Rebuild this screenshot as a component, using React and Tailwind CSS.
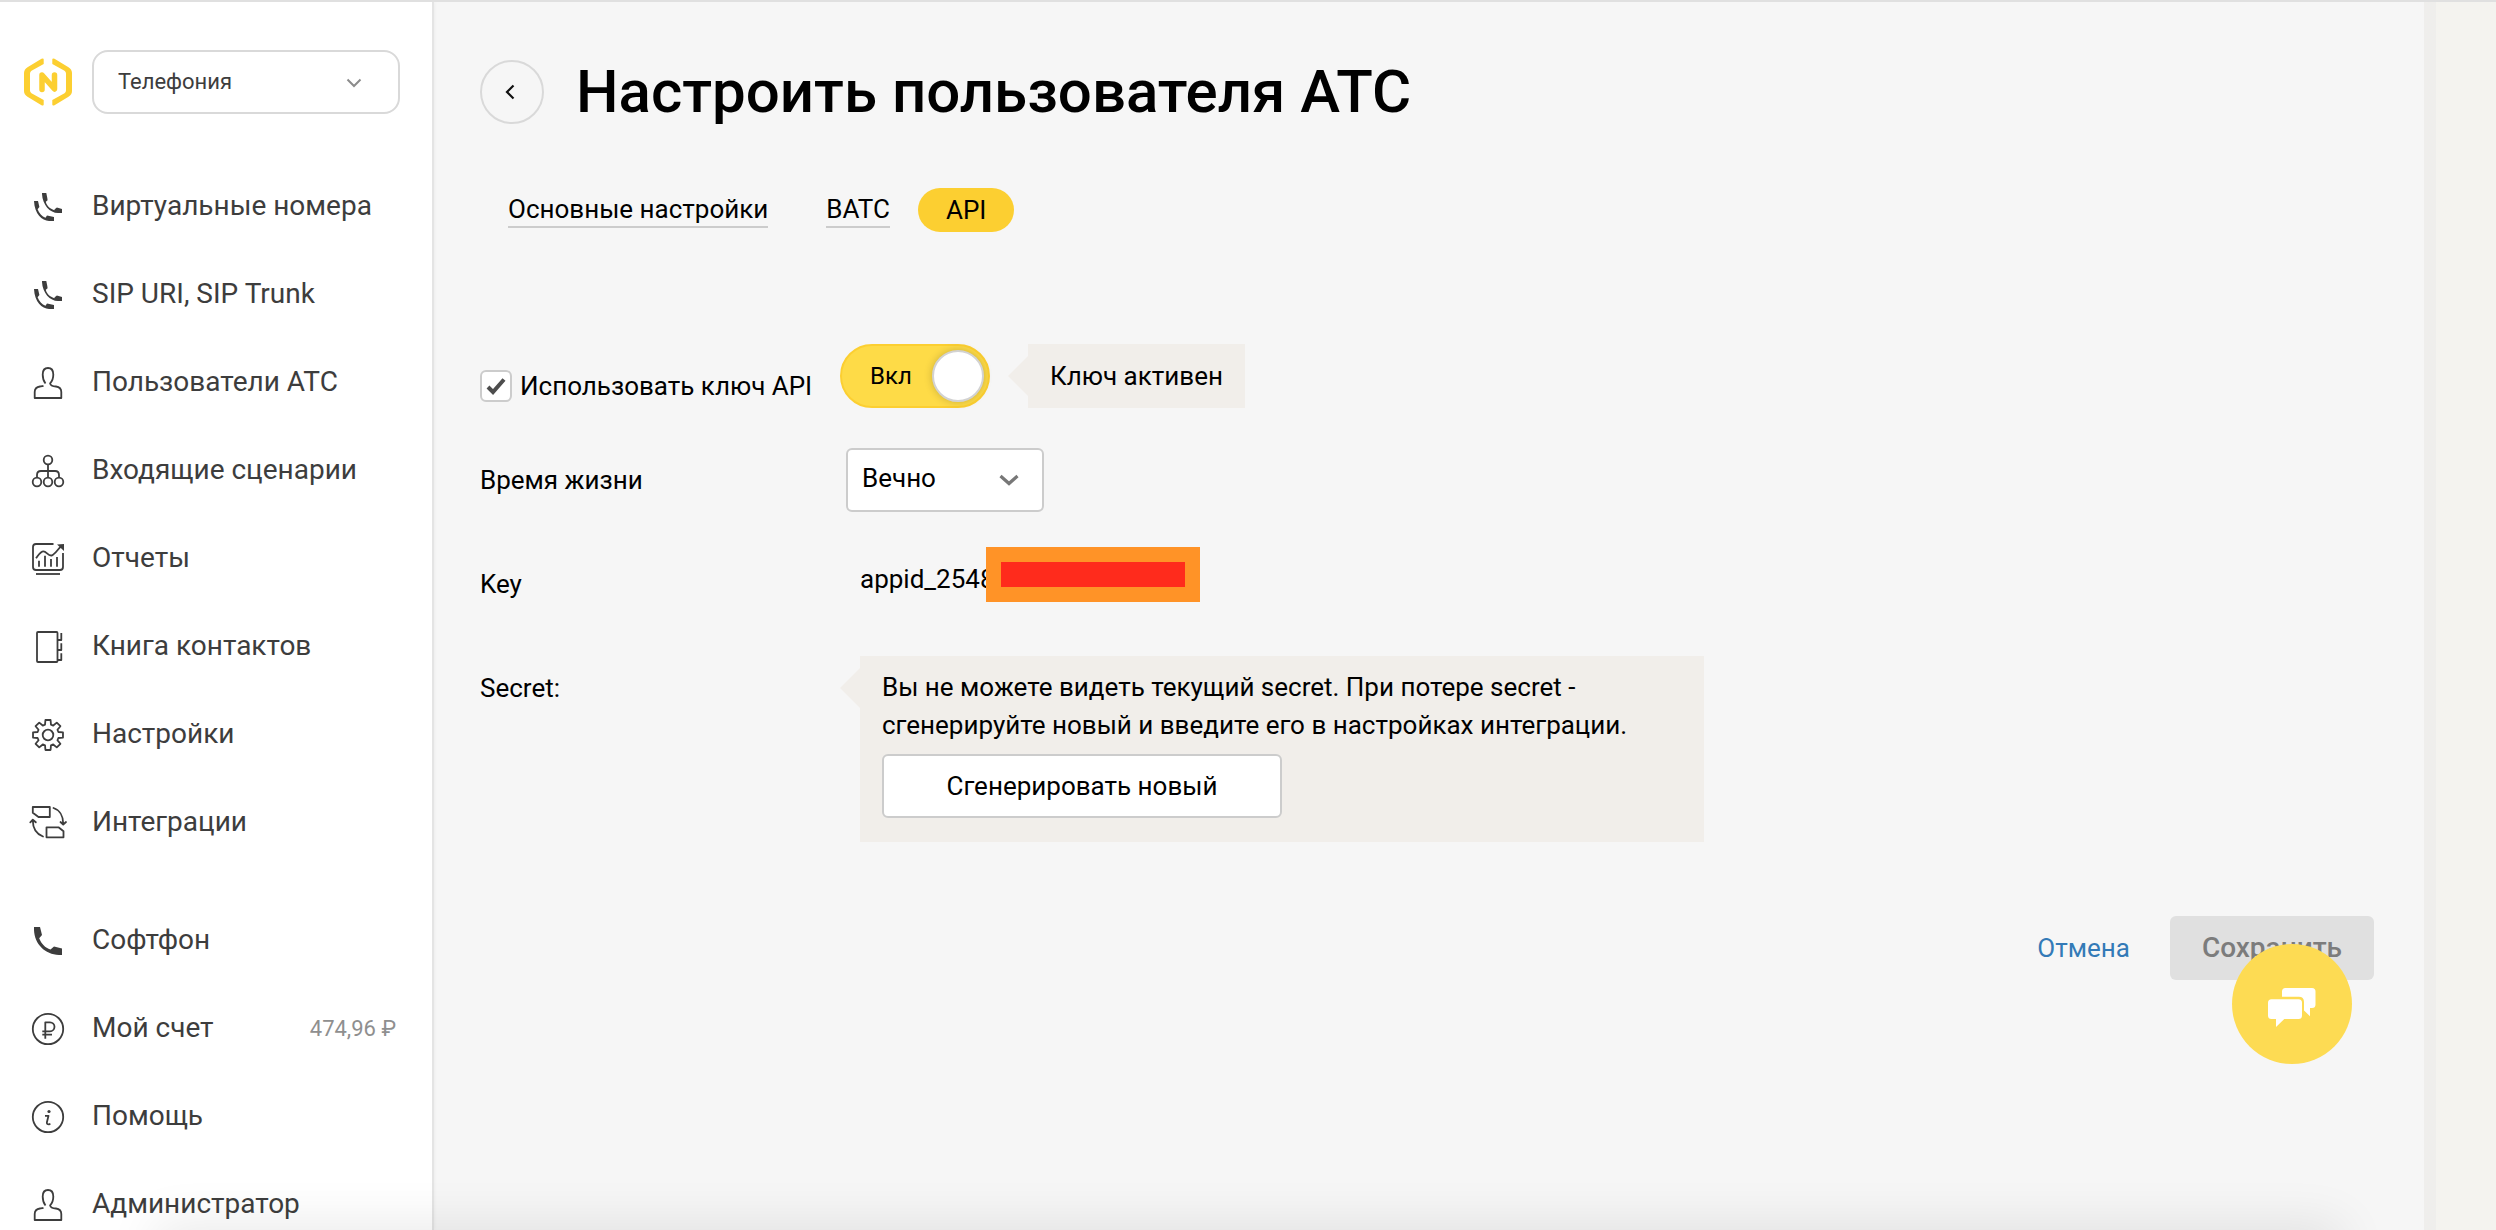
import React from "react";

const stroke = {
  fill: "none",
  stroke: "currentColor",
  strokeWidth: 1.8,
  strokeLinejoin: "round",
};

function Icon({ children }) {
  return (
    <svg viewBox="0 0 40 40" className="size-10 shrink-0" aria-hidden="true">
      {children}
    </svg>
  );
}

function PhonesIcon() {
  return (
    <Icon>
      <path
        fill="currentColor"
        d="M14 7h4.300l1 5 .3 2.200-1.800 1.600C18.600 19.500 22 23 26.300 24.200l.4-1 2.200-1.600L34 23v4h-4C22 27 14.500 19 14 8Z"
      />
      <path
        fill="currentColor"
        d="M6 15h4l1.400 6-1.800 2.200C11 27.300 14 30.300 17.500 31.800L19 29.500l7 1.500v4h-5C14 34.500 6.500 28 6 15Z"
      />
    </Icon>
  );
}

function PhoneIcon() {
  return (
    <Icon>
      <path
        fill="currentColor"
        d="M6 7h6l2 8-2.800 3.300C13.500 24 17 27.800 22.500 29.400L26 26.600l8 1.800V35h-3C17 34.500 6.500 24 6 10Z"
      />
    </Icon>
  );
}

function UserIcon() {
  return (
    <Icon>
      <path
        {...stroke}
        d="M17.500 21.500C15 18.500 14.700 15 14.700 12.500 14.700 8 17 6 20 6s5.300 2 5.300 6.500c0 3.500-.8 6.500-3.200 8.800.4 2.400 2.400 2.900 5.900 3.200 4 .5 5.300 2.500 5.300 5.500v6H6.700v-6c0-3 1.300-5 5.300-5.500 1.500-.2 2.500-.3 3.500-.6"
      />
    </Icon>
  );
}

function ScenarioIcon() {
  return (
    <Icon>
      <g {...stroke}>
        <circle cx="20" cy="10" r="4.300" />
        <circle cx="9" cy="32" r="4.300" />
        <circle cx="20" cy="32" r="4.300" />
        <circle cx="31" cy="32" r="4.300" />
        <path d="M20 14.300v13.400M9 27.700V25q0-4 4-4h14q4 0 4 4v2.700" />
      </g>
    </Icon>
  );
}

function ReportsIcon() {
  return (
    <Icon>
      <g {...stroke}>
        <path d="M25.500 6H8Q5 6 5 9v20q0 3 3 3h24q3 0 3-3V15" />
        <path d="M8 36h24" />
        <path d="M8 20.300c3-4 4.500-7 7.500-7 3 0 5 5.500 8.500 4 3-1.300 5-5 9-9" />
        <path d="M11 22.700v6M17 17.700v11M23 21v7.700M29 19v9.700" />
      </g>
      <path fill="currentColor" d="M29 6.500 36 6v7Z" />
    </Icon>
  );
}

function BookIcon() {
  return (
    <Icon>
      <g {...stroke}>
        <rect x="9" y="6" width="20.500" height="30" rx="1" />
        <path d="M29.500 14h3.800V7M29.500 24h3.800v-6.700M29.500 34h3.800v-6.700" />
      </g>
    </Icon>
  );
}

// Outline of an eight-toothed cog centred on (20, 21).
const gearPath = (() => {
  const points = [];
  for (let i = 0; i < 8; i += 1) {
    const base = (i * Math.PI) / 4;
    [
      [-0.28, 10.8],
      [-0.17, 15.2],
      [0.17, 15.2],
      [0.28, 10.8],
    ].forEach(([angle, radius]) => {
      const x = 20 + radius * Math.sin(base + angle);
      const y = 21 - radius * Math.cos(base + angle);
      points.push(`${x.toFixed(2)} ${y.toFixed(2)}`);
    });
  }
  return `M${points.join("L")}Z`;
})();

function GearIcon() {
  return (
    <Icon>
      <g {...stroke}>
        <path d={gearPath} />
        <circle cx="20" cy="21" r="5.300" />
      </g>
    </Icon>
  );
}

function IntegrationIcon() {
  return (
    <Icon>
      <g {...stroke} strokeLinecap="round">
        <path d="M4.800 5h17v10H10.500L4.800 10.800Z" />
        <path d="M18.500 25.300h12l5 4v6h-17Z" />
        <path d="M25.500 6c6 2 9.700 8 9.700 15.500M32.500 20l2.700 2.500L38 20" />
        <path d="M15 34.500C8.500 32 4.800 26 4.800 18.500M2.300 20.300l2.500-2.600L7.800 20.300" />
      </g>
    </Icon>
  );
}

function RubleIcon() {
  return (
    <Icon>
      <g {...stroke}>
        <circle cx="20" cy="21" r="15.200" />
        <path d="M17.300 30.700V14.300H22a4.500 4.500 0 0 1 0 9h-7.700M14.300 26.700H24" />
      </g>
    </Icon>
  );
}

function InfoIcon() {
  return (
    <Icon>
      <g {...stroke}>
        <circle cx="20" cy="21" r="15.200" />
        <path d="M17 19.800h3.500l-1.600 6.500q-.4 2 2 2l1.500-.5" />
      </g>
      <circle cx="21" cy="15.500" r="1.600" fill="currentColor" />
    </Icon>
  );
}

function Logo() {
  const bracket =
    "M17.500.8Q19.700 0 19.700 1.500V6L7.500 12.800Q6 14 6 15.500v17Q6 34 7.500 35.200L19.700 42v4.500q0 1.500-2.200.7l-14-8.400Q0 36.500 0 33V15q0-3.500 3.500-5.800Z";
  return (
    <svg viewBox="0 0 48 48" className="size-12 shrink-0 text-[#fccf31]" aria-hidden="true">
      <path fill="currentColor" d={bracket} />
      <path fill="currentColor" d={bracket} transform="matrix(-1 0 0 1 48 0)" />
      <path
        d="M18 31.500V17l12.500 14V17"
        fill="none"
        stroke="currentColor"
        strokeWidth="5.500"
        strokeLinecap="round"
        strokeLinejoin="round"
      />
    </svg>
  );
}

const mainItems = [
  { label: "Виртуальные номера", icon: PhonesIcon },
  { label: "SIP URI, SIP Trunk", icon: PhonesIcon },
  { label: "Пользователи АТС", icon: UserIcon },
  { label: "Входящие сценарии", icon: ScenarioIcon },
  { label: "Отчеты", icon: ReportsIcon },
  { label: "Книга контактов", icon: BookIcon },
  { label: "Настройки", icon: GearIcon },
  { label: "Интеграции", icon: IntegrationIcon },
];

const accountItems = [
  { label: "Софтфон", icon: PhoneIcon },
  { label: "Мой счет", icon: RubleIcon, value: "474,96 ₽" },
  { label: "Помощь", icon: InfoIcon },
  { label: "Администратор", icon: UserIcon },
];

function NavList({ items }) {
  return (
    <ul>
      {items.map(({ label, icon: ItemIcon, value }) => (
        <li key={label}>
          <a href="#" className="flex h-22 items-center gap-6 pr-9 pl-7">
            <ItemIcon />
            <span className="flex-1 whitespace-nowrap">{label}</span>
            {value && <span className="text-[22px] text-[#8f8f8f]">{value}</span>}
          </a>
        </li>
      ))}
    </ul>
  );
}

function Sidebar() {
  return (
    <aside className="z-10 flex w-[434px] shrink-0 flex-col border-r-2 border-[#e4e4e4] bg-white text-[28px] text-[#3d3d3d] shadow-[0_0_4px_rgba(0,0,0,0.06)]">
      <div className="flex items-center gap-5 pt-12 pr-8 pl-6">
        <Logo />
        <div className="relative flex-1">
          <select
            aria-label="Раздел"
            className="h-16 w-full appearance-none rounded-2xl border-2 border-[#d9d9d9] bg-white pb-0.5 pl-6 text-[22px]"
          >
            <option>Телефония</option>
          </select>
          <svg
            viewBox="0 0 16 10"
            className="pointer-events-none absolute top-7 right-[38px] h-[10px] w-4"
            aria-hidden="true"
          >
            <path d="M1.500 1.500 8 8l6.500-6.500" fill="none" stroke="#8c8c8c" strokeWidth="2" />
          </svg>
        </div>
      </div>
      <nav className="mt-12 flex flex-col gap-[30px]">
        <NavList items={mainItems} />
        <NavList items={accountItems} />
      </nav>
    </aside>
  );
}

function NoticeArrow() {
  return (
    <svg viewBox="0 0 20 40" className="mt-3 h-10 w-5 shrink-0 text-[#f1eeea]" aria-hidden="true">
      <path d="M20 0v40L0 20Z" fill="currentColor" />
    </svg>
  );
}

function FormRow({ label, children }) {
  return (
    <div className="grid grid-cols-[360px_1fr] items-start">
      <div className="flex h-16 items-center">{label}</div>
      {children}
    </div>
  );
}

function ApiSwitch() {
  return (
    <label className="relative flex h-16 w-[150px] cursor-pointer items-center rounded-full border-2 border-[#fccf31] bg-[#fedb47] pl-7 text-2xl">
      <input type="checkbox" role="switch" defaultChecked className="sr-only" />
      Вкл
      <span className="absolute top-1 right-1 size-[52px] rounded-full border-2 border-[#d2d2d2] bg-white shadow-[0_0_8px_rgba(0,0,0,0.2)]" />
    </label>
  );
}

function ApiForm() {
  return (
    <form className="mt-28 flex flex-col gap-10" onSubmit={(e) => e.preventDefault()}>
      <FormRow
        label={
          <label className="flex items-center gap-2 pt-5">
            <span className="relative size-8">
              <input
                type="checkbox"
                defaultChecked
                className="block size-8 appearance-none rounded-md border-2 border-[#ccc] bg-white"
              />
              <svg
                viewBox="0 0 32 32"
                className="pointer-events-none absolute inset-0 size-8"
                aria-hidden="true"
              >
                <path d="M8 17 13 22 24 9.500" fill="none" stroke="#4d4d4d" strokeWidth="4" />
              </svg>
            </span>
            Использовать ключ API
          </label>
        }
      >
        <div className="flex">
          <ApiSwitch />
          <div className="flex pl-[18px]">
            <NoticeArrow />
            <p className="flex h-16 items-center bg-[#f1eeea] px-[22px]">Ключ активен</p>
          </div>
        </div>
      </FormRow>

      <FormRow label={<label htmlFor="lifetime">Время жизни</label>}>
        <div className="relative ml-1.5 w-[198px]">
          <select
            id="lifetime"
            className="h-16 w-full appearance-none rounded-md border-2 border-[#ccc] bg-white pb-1 pl-3.5"
          >
            <option>Вечно</option>
          </select>
          <svg
            viewBox="0 0 20 12"
            className="pointer-events-none absolute top-[26px] right-[25px] h-3 w-5"
            aria-hidden="true"
          >
            <path d="M1.500 2 10 9.500 18.500 2" fill="none" stroke="#777" strokeWidth="3.200" />
          </svg>
        </div>
      </FormRow>

      <FormRow label="Key">
        <div className="relative pt-2 pl-5 leading-[38px]">
          appid_2548
          <span className="absolute -top-[5px] left-[146px] h-[55px] w-[214px] border-[15px] border-[#ff9327] bg-[#ff2b1c]" />
        </div>
      </FormRow>

      <FormRow label="Secret:">
        <div className="flex">
          <NoticeArrow />
          <div className="w-full max-w-[844px] bg-[#f1eeea] px-[22px] pt-3 pb-6">
            <p className="leading-[38px]">
              Вы не можете видеть текущий secret. При потере secret - сгенерируйте новый и введите
              его в настройках интеграции.
            </p>
            <button
              type="button"
              className="mt-2.5 h-16 w-[400px] rounded-md border-2 border-[#ccc] bg-white"
            >
              Сгенерировать новый
            </button>
          </div>
        </div>
      </FormRow>

      <div className="mt-[34px] flex items-center justify-end gap-10">
        <a href="#" className="text-[#337ab7]">
          Отмена
        </a>
        <button
          type="submit"
          disabled
          className="h-16 rounded-md bg-[#e0e0e0] px-8 text-[28px] font-medium text-[#7c7c7c]"
        >
          Сохранить
        </button>
      </div>
    </form>
  );
}

function ChatButton() {
  return (
    <button
      type="button"
      aria-label="Чат"
      className="fixed right-36 bottom-[166px] z-20 flex size-[120px] items-center justify-center rounded-full bg-[#fddb53]"
    >
      <svg viewBox="0 0 48 32" className="mt-2 h-8 w-12 overflow-visible" aria-hidden="true">
        <path
          fill="#fff"
          d="M3.500 7.300h27q3.500 0 3.500 3.500v12.700q0 3.500-3.500 3.500H16.300L8 35v-8H3.500Q0 27 0 23.500V10.800q0-3.500 3.500-3.500Z"
        />
        <path
          fill="#fff"
          d="M14 4.800V-.5Q14-4 17.500-4h26.500Q47.500-4 47.500-.5v13q0 3.500-3.500 3.500h-2v8.300l-6-5.800V10q0-5.200-5.200-5.200Z"
        />
      </svg>
    </button>
  );
}

export default function App() {
  return (
    <div className="relative flex h-screen overflow-hidden border-t-2 border-[#e0e0e0] bg-[#f6f6f6] font-['Roboto',sans-serif] text-[26px] text-black">
      <Sidebar />
      <main className="min-w-0 flex-1 pt-[58px] pr-[50px] pl-[46px]">
        <header className="flex items-center gap-8">
          <button
            type="button"
            aria-label="Назад"
            className="flex size-16 shrink-0 items-center justify-center rounded-full border-2 border-[#d9d9d9]"
          >
            <svg viewBox="0 0 12 16" className="mr-1 h-4 w-3" aria-hidden="true">
              <path d="M9.500 1.500 3 8l6.500 6.500" fill="none" stroke="#111" strokeWidth="2.200" />
            </svg>
          </button>
          <h1 className="text-[60px] leading-16 font-medium">Настроить пользователя АТС</h1>
        </header>
        <nav className="mt-16 flex h-11 items-center pl-7 leading-[34px]">
          <a href="#" className="border-b-2 border-[#ccc]">
            Основные настройки
          </a>
          <a href="#" className="ml-[58px] border-b-2 border-[#ccc]">
            ВАТС
          </a>
          <a
            href="#"
            aria-current="page"
            className="ml-7 flex h-11 items-center rounded-full bg-[#fccf31] px-7"
          >
            API
          </a>
        </nav>
        <ApiForm />
      </main>
      <div className="w-[72px] shrink-0 border-l-[12px] border-[#efeeec] bg-[#f4f3ef]" />
      <div className="pointer-events-none absolute inset-x-40 top-full z-10 h-10 shadow-[0_0_50px_6px_rgba(0,0,0,0.09)]" />
      <ChatButton />
    </div>
  );
}
